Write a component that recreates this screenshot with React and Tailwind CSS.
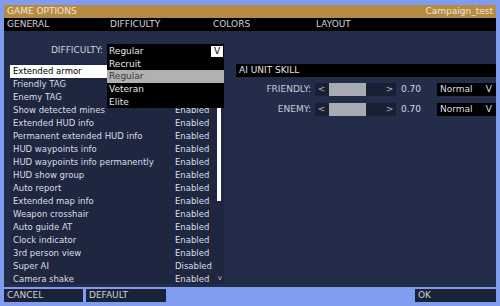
import React from 'react';

const rows = [
  ['Extended armor', 'Enabled'],
  ['Friendly TAG', 'Enabled'],
  ['Enemy TAG', 'Enabled'],
  ['Show detected mines', 'Enabled'],
  ['Extended HUD info', 'Enabled'],
  ['Permanent extended HUD info', 'Enabled'],
  ['HUD waypoints info', 'Enabled'],
  ['HUD waypoints info permanently', 'Enabled'],
  ['HUD show group', 'Enabled'],
  ['Auto report', 'Enabled'],
  ['Extended map info', 'Enabled'],
  ['Weapon crosshair', 'Enabled'],
  ['Auto guide AT', 'Enabled'],
  ['Clock indicator', 'Enabled'],
  ['3rd person view', 'Enabled'],
  ['Super AI', 'Disabled'],
  ['Camera shake', 'Enabled'],
];

const tabs = ['GENERAL', 'DIFFICULTY', 'COLORS', 'LAYOUT'];

const SkillRow = ({ label, mt }) => (
  <div className={`flex items-center h-[13px] ${mt}`}>
    <div className="w-[75px] text-right text-[#c8ccd8]">{label}</div>
    <div className="ml-[4px] w-[13px] h-[13px] bg-[#1a2034] flex items-center justify-center text-[#b0b4c0]">&lt;</div>
    <div className="w-[55px] h-[13px] bg-[#1a2034] flex pl-[1px]">
      <div className="w-[37px] h-full bg-[#a9abb3]" />
    </div>
    <div className="w-[13px] h-[13px] bg-[#1a2034] flex items-center justify-center text-[#b0b4c0]">&gt;</div>
    <div className="ml-[5px] w-[36px] text-[#d8dae2]">0.70</div>
    <div className="w-[59px] h-[13px] bg-black flex items-center justify-between pl-[3px] pr-[4px] text-[#dcdde4]">
      <span>Normal</span>
      <span>V</span>
    </div>
  </div>
);

const App = () => {
  return (
    <div
      className="w-[500px] h-[306px] bg-[#7f9cee] pt-[5px] px-[4px] text-[9px] leading-[13px] overflow-hidden"
      style={{ fontFamily: '"DejaVu Sans", sans-serif' }}
    >
      <div className="h-[13px] bg-[#b78a41] flex justify-between px-[3px] text-[#efe6d6]">
        <span>GAME OPTIONS</span>
        <span>Campaign_test</span>
      </div>
      <div className="h-[13px] bg-black flex text-[#cfd2dc]">
        {tabs.map((t) => (
          <div key={t} className="w-[103px] pl-[3px]">{t}</div>
        ))}
      </div>

      <div className="h-[256px] bg-[#232c48] relative">
        <div className="flex pt-[13px] h-[27px]">
          <div className="w-[99px] text-right text-[#d0d3dc]">DIFFICULTY:</div>
          <div className="relative ml-[4px] w-[117px] h-[14px] bg-black flex items-center justify-between pl-[2px] pr-[1px] text-[#e2e3ea] z-10">
            <span>Regular</span>
            <span className="w-[12px] h-[11px] bg-white text-black flex items-center justify-center">V</span>
            <div className="absolute left-0 top-[14px] w-[117px] bg-black text-[#e2e3ea]">
              <div className="h-[12px] leading-[12px] pl-[2px]">Recruit</div>
              <div className="h-[13px] pl-[2px] bg-[#b1b1b3] text-[#3a3a40]">Regular</div>
              <div className="h-[13px] pl-[2px]">Veteran</div>
              <div className="h-[12px] leading-[12px] pl-[2px]">Elite</div>
            </div>
          </div>
        </div>

        <div className="flex mt-[6px]">
          <div className="ml-[6px] w-[214px] h-[220px] bg-[#1e2640] relative pt-[1px] text-[8.5px]">
            {rows.map(([name, val], i) => (
              <div
                key={name}
                className={`h-[13px] flex pl-[3px] ${i === 0 ? 'bg-white text-black' : 'text-[#dcdee6]'}`}
              >
                <span className="w-[162px] whitespace-nowrap overflow-hidden">{name}</span>
                <span>{val}</span>
              </div>
            ))}
            <div className="absolute right-[3px] top-0 w-[4px] h-[137px] bg-white" />
            <div className="absolute right-[2px] bottom-[2px] text-[7px] leading-[8px] text-[#c0c4d0]">v</div>
          </div>

          <div className="ml-[12px] flex-1">
            <div className="h-[13px] bg-black pl-[3px] text-[#e0e2ea]">AI UNIT SKILL</div>
            <SkillRow label="FRIENDLY:" mt="mt-[6px]" />
            <SkillRow label="ENEMY:" mt="mt-[7px]" />
          </div>
        </div>
      </div>

      <div className="flex mt-[2px] h-[13px] text-[#cfd2dc]">
        <div className="w-[79px] bg-[#1b2136] pl-[3px]">CANCEL</div>
        <div className="ml-[3px] w-[80px] bg-[#1b2136] pl-[3px]">DEFAULT</div>
        <div className="ml-auto w-[81px] bg-[#1b2136] pl-[3px]">OK</div>
      </div>
    </div>
  );
};

export default App;
